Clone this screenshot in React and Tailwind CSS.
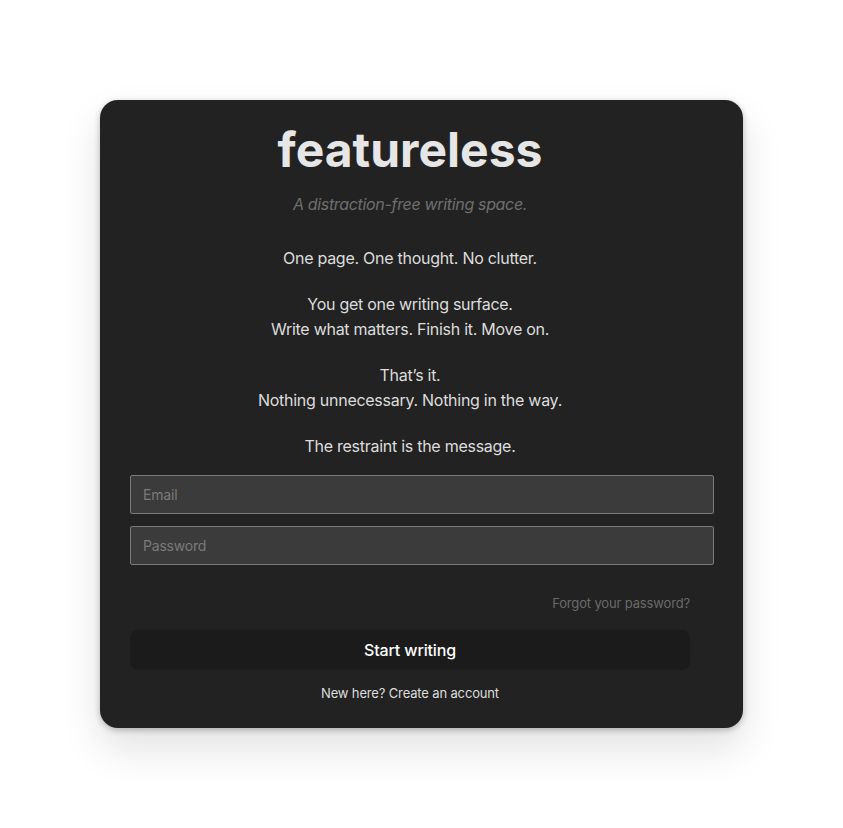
import React, { useState } from "react";

export default function App() {
  const [email, setEmail] = useState("");
  const [password, setPassword] = useState("");

  return (
    <div className="min-h-screen bg-white pt-[100px] font-['Inter',_sans-serif]">
      <div className="mx-auto w-[643px] h-[628px] rounded-[18px] bg-[#222222] pl-[30px] pt-[24px] shadow-[0_2px_6px_rgba(0,0,0,0.25),0_20px_40px_rgba(0,0,0,0.12)]">
        <div className="w-[560px]">
          {/* Header */}
          <h1 className="text-center text-[48px] leading-[52px] font-bold text-[#e6e6e6]">
            featureless
          </h1>
          <p className="mt-[16px] text-center text-[16px] italic tracking-[-0.33px] text-[#6f6f6f]">
            A distraction-free writing space.
          </p>

          {/* Copy */}
          <div className="mt-[30px] space-y-[21px] text-center text-[16px] leading-[25px] tracking-[-0.27px] text-[#dddddd]">
            <p>One page. One thought. No clutter.</p>
            <p>
              You get one writing surface.
              <br />
              Write what matters. Finish it. Move on.
            </p>
            <p>
              That’s it.
              <br />
              Nothing unnecessary. Nothing in the way.
            </p>
            <p>The restraint is the message.</p>
          </div>

          {/* Form */}
          <div className="mt-[16px] flex flex-col gap-[12px]">
            <input
              type="email"
              value={email}
              onChange={(e) => setEmail(e.target.value)}
              placeholder="Email"
              className="w-[584px] h-[39px] rounded-[2px] border border-[#7a7a7a] bg-[#3b3b3b] px-[12px] text-[14px] tracking-[-0.2px] text-[#dddddd] placeholder:text-[#7a7a7a] outline-none"
            />
            <input
              type="password"
              value={password}
              onChange={(e) => setPassword(e.target.value)}
              placeholder="Password"
              className="w-[584px] h-[39px] rounded-[2px] border border-[#7a7a7a] bg-[#3b3b3b] px-[12px] text-[14px] tracking-[-0.2px] text-[#dddddd] placeholder:text-[#7a7a7a] outline-none"
            />
          </div>

          <div className="mt-[25px] text-right">
            <a href="#" className="text-[13px] tracking-[-0.15px] text-[#6a6a6a]">
              Forgot your password?
            </a>
          </div>

          <button className="mt-[16px] h-[40px] w-full rounded-[8px] bg-[#1b1b1b] text-[16px] font-medium tracking-[-0.15px] text-white">
            Start writing
          </button>

          <p className="mt-[14px] text-center text-[13px] tracking-[-0.15px] text-[#dddddd]">
            New here? Create an account
          </p>
        </div>
      </div>
    </div>
  );
}
